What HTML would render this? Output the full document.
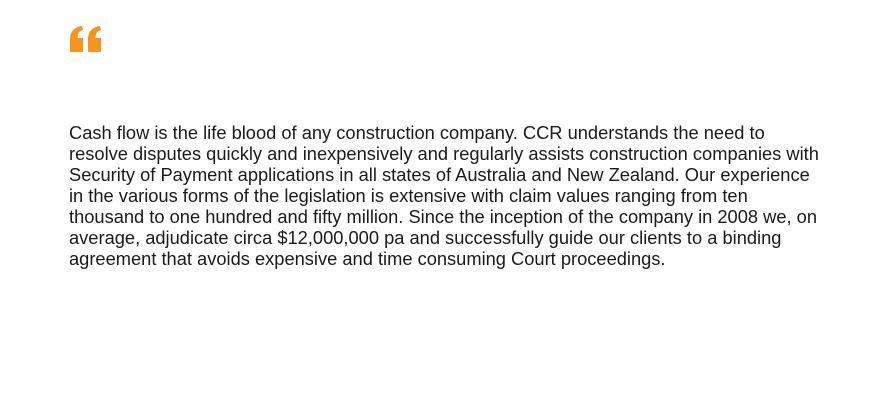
<!DOCTYPE html>
<html><head><style>
body{margin:0;background:#fff;width:888px;height:412px;overflow:hidden}
.q{position:absolute;left:70px;top:26px}
.t{position:absolute;left:69px;top:122px;font:18.3px "Liberation Sans",sans-serif;color:#1a1a1a;line-height:21px;white-space:nowrap}
</style></head><body>
<svg class="q" width="34" height="28" viewBox="0 0 34 28"><g fill="#f7941d">
<path d="M0,26 L0,13 C0,6 4,1 12,0 L13,4 C9,5 7.5,8 7.5,12 L13,12 L13,26 Z"/>
<path d="M18,26 L18,13 C18,6 22,1 30,0 L31,4 C27,5 25.5,8 25.5,12 L31,12 L31,26 Z"/>
</g></svg>
<div class="t">Cash flow is the life blood of any construction company. CCR understands the need to<br>resolve disputes quickly and inexpensively and regularly assists construction companies with<br>Security of Payment applications in all states of Australia and New Zealand. Our experience<br>in the various forms of the legislation is extensive with claim values ranging from ten<br>thousand to one hundred and fifty million. Since the inception of the company in 2008 we, on<br>average, adjudicate circa $12,000,000 pa and successfully guide our clients to a binding<br>agreement that avoids expensive and time consuming Court proceedings.</div>
</body></html>
